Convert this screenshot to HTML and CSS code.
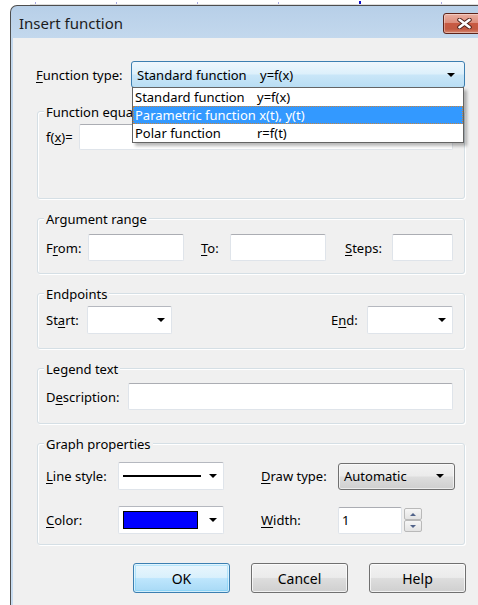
FILE: index.html
```html
<!DOCTYPE html>
<html>
<head>
<meta charset="utf-8">
<title>Insert function</title>
<link rel="stylesheet" href="styles.css">
</head>
<body>
<div class="ruler"><i></i><i></i><i></i><i></i><i class="mark"></i><i></i></div>
<div class="window">
  <div class="titlebar">
    <span class="title">Insert function</span>
    <button class="close" type="button" aria-label="Close">
      <svg width="15" height="11" viewBox="0 0 15 11">
        <path d="M2.5 1.8 L12.5 9.2 M12.5 1.8 L2.5 9.2" stroke="#4a1e18" stroke-width="4.4" stroke-linecap="round"/>
        <path d="M2.5 1.8 L12.5 9.2 M12.5 1.8 L2.5 9.2" stroke="#fff" stroke-width="2.6" stroke-linecap="round"/>
      </svg>
    </button>
  </div>

  <div class="client">
    <div class="type-row">
      <span class="lbl type-lbl"><u>F</u>unction type:</span>
      <div class="combo-wrap">
        <div class="combo combo-focus">
          <span class="col1">Standard function</span><span>y=f(x)</span>
          <span class="arr"></span>
        </div>
        <ul class="droplist">
          <li><span class="col1">Standard function</span><span>y=f(x)</span></li>
          <li class="sel">Parametric function x(t), y(t)</li>
          <li><span class="col1">Polar function</span><span>r=f(t)</span></li>
        </ul>
      </div>
    </div>

    <section class="group g-eq">
      <div class="legend">Function equation</div>
      <div class="row">
        <span class="lbl w-fx">f(<u>x</u>)=</span>
        <div class="edit grow eq-edit"></div>
      </div>
    </section>

    <section class="group g-range">
      <div class="legend">Argument range</div>
      <div class="row">
        <span class="lbl w-from">F<u>r</u>om:</span>
        <div class="edit w-96"></div>
        <span class="lbl w-to"><u>T</u>o:</span>
        <div class="edit w-96"></div>
        <span class="lbl w-steps"><u>S</u>teps:</span>
        <div class="edit w-61"></div>
      </div>
    </section>

    <section class="group g-end">
      <div class="legend">Endpoints</div>
      <div class="row">
        <span class="lbl w-start">St<u>a</u>rt:</span>
        <div class="combo combo-white w-85"><span class="arr"></span></div>
        <span class="lbl w-end">E<u>n</u>d:</span>
        <div class="combo combo-white w-86"><span class="arr"></span></div>
      </div>
    </section>

    <section class="group g-legend">
      <div class="legend">Legend text</div>
      <div class="row">
        <span class="lbl w-desc">D<u>e</u>scription:</span>
        <div class="edit grow"></div>
      </div>
    </section>

    <section class="group g-graph">
      <div class="legend">Graph properties</div>
      <div class="graph-grid">
        <span class="lbl"><u>L</u>ine style:</span>
        <div class="combo combo-white combo-line"><span class="line-sample"></span><span class="arr"></span></div>
        <span></span>
        <span class="lbl"><u>D</u>raw type:</span>
        <div class="combo combo-button"><span>Automatic</span><span class="arr"></span></div>

        <span class="lbl"><u>C</u>olor:</span>
        <div class="combo combo-white combo-line"><span class="swatch"></span><span class="arr"></span></div>
        <span></span>
        <span class="lbl"><u>W</u>idth:</span>
        <div class="spin-field">
          <div class="edit edit-num">1</div>
          <div class="spin">
            <span class="spin-btn"><i class="up"></i></span>
            <span class="spin-btn"><i class="down"></i></span>
          </div>
        </div>
      </div>
    </section>

    <div class="buttons">
      <button class="btn btn-default" type="button">OK</button>
      <button class="btn" type="button">Cancel</button>
      <button class="btn" type="button">Help</button>
    </div>
  </div>
</div>
</body>
</html>
```

FILE: styles.css
```css
* {
  box-sizing: border-box;
}

html,
body {
  margin: 0;
}

body {
  width: 478px;
  height: 605px;
  overflow: hidden;
  background: #fff;
  font-family: "Noto Sans", "Open Sans", sans-serif;
  font-size: 13px;
  color: #000;
}

u {
  text-decoration: underline;
  text-underline-offset: 2px;
}

/* ruler of the window behind the dialog */
.ruler {
  height: 5px;
  margin-left: 30px;
  padding-left: 5px;
  border-bottom: 1px solid #dedede;
  display: flex;
  align-items: flex-end;
  gap: 80px;
}

.ruler i {
  width: 1px;
  height: 2px;
  background: #a9a9e2;
}

.ruler i.mark {
  width: 2px;
  height: 3px;
  background: #1010c8;
}

/* dialog frame */
.window {
  margin-left: 10px;
  width: 484px;
  height: 601px;
  border: 1px solid #4d4d4d;
  border-bottom: 0;
  border-radius: 7px 7px 0 0;
  background: linear-gradient(#b7cfe8, #c3d8ed 32px, #c8dcf0);
  padding: 0 2px;
  display: flex;
  flex-direction: column;
}

.titlebar {
  height: 32px;
  flex: none;
  display: flex;
  align-items: flex-start;
}

.title {
  margin: 7px 0 0 6px;
  font-size: 15px;
  line-height: 20px;
  color: #1c1c1c;
}

.close {
  margin: 7px 5px 0 auto;
  width: 43px;
  height: 21px;
  padding: 0;
  border: 1px solid #5e241a;
  border-radius: 3px;
  background: linear-gradient(#eab0a3, #dc8e7c 45%, #c85a43 50%, #c25a42 80%, #d78a73);
  box-shadow: inset 0 0 0 1px rgba(255, 255, 255, 0.35);
  display: flex;
  align-items: center;
  justify-content: center;
}

.client {
  flex: 1;
  background: #f0f0f0;
  padding: 23px 0 0 24px;
}

/* generic controls */
.lbl {
  white-space: nowrap;
  line-height: 16px;
  flex: none;
}

.edit {
  height: 27px;
  flex: none;
  background: #fff;
  border: 1px solid #dfe4ea;
  border-top-color: #abadb3;
  border-radius: 2px;
}

.grow {
  flex: 1;
}

.combo {
  height: 27px;
  flex: none;
  border-radius: 2px;
  display: flex;
  align-items: center;
  white-space: nowrap;
}

.combo-white {
  background: #fff;
  border: 1px solid #dfe4ea;
  border-top-color: #b5b8bf;
  justify-content: flex-end;
  padding-right: 6px;
}

.arr {
  width: 0;
  height: 0;
  border-left: 4px solid transparent;
  border-right: 4px solid transparent;
  border-top: 4px solid #000;
}

.col1 {
  display: inline-block;
  width: 123px;
}

/* function type */
.type-row {
  display: flex;
  align-items: center;
  height: 27px;
}

.type-lbl {
  width: 95px;
  margin-left: -1px;
}

.combo-wrap {
  position: relative;
  width: 334px;
}

.combo-focus {
  border: 1px solid #3c7fb1;
  border-radius: 3px;
  background: linear-gradient(#eef7fd, #dcf0fb 48%, #c9e6f8 52%, #b9def4);
  padding: 0 9px 0 5px;
}

.combo-focus .arr {
  margin-left: auto;
}

.droplist {
  position: absolute;
  left: 1px;
  top: calc(100% - 1px);
  width: 332px;
  margin: 0;
  padding: 0;
  list-style: none;
  background: #fff;
  border: 1px solid #646464;
  box-shadow: 3px 3px 3px rgba(0, 0, 0, 0.28);
  z-index: 2;
}

.droplist li {
  height: 18px;
  line-height: 18px;
  padding-left: 2px;
  white-space: nowrap;
}

.droplist li .col1 {
  width: 122px;
}

.droplist li.sel {
  background: #3399ff;
  color: #fff;
  outline: 1px dotted #c8843e;
  outline-offset: -1px;
}

/* group boxes */
.group {
  width: 428px;
  margin-top: 19px;
  border: 1px solid #d5dfe5;
  border-radius: 3px;
  box-shadow: 1px 1px 0 #fff, inset 1px 1px 0 #fff;
  padding: 0 11px 0 8px;
}

.legend {
  width: max-content;
  margin: -8px 0 0 -2px;
  padding: 0 2px;
  line-height: 16px;
  background: #f0f0f0;
}

.row {
  display: flex;
  align-items: center;
}

.g-eq {
  margin-top: 23px;
  height: 88px;
}

.g-eq .row {
  margin-top: 4px;
}

.eq-edit {
  height: 26px;
}

.w-fx { width: 33px; }
.w-from { width: 42px; }
.w-to { width: 29px; margin-left: 17px; }
.w-steps { width: 47px; margin-left: 19px; }
.w-96 { width: 96px; }
.w-61 { width: 61px; }

.g-range {
  height: 56px;
}

.g-range .row {
  margin-top: 7px;
}

.g-end {
  height: 56px;
}

.g-end .row {
  margin-top: 4px;
}

.g-end .combo {
  height: 28px;
}

.w-start { width: 41px; }
.w-end { width: 36px; margin-left: auto; }
.w-85 { width: 85px; }
.w-86 { width: 86px; }

.g-legend {
  height: 56px;
}

.g-legend .row {
  margin-top: 6px;
}

.w-desc { width: 82px; }

/* graph properties */
.g-graph {
  height: 102px;
}

.graph-grid {
  margin-top: 10px;
  display: grid;
  grid-template-columns: 72px 106px 37px 77px 117px;
  grid-auto-rows: 28px;
  row-gap: 16px;
  align-items: center;
}

.combo-line {
  height: 28px;
  padding-left: 4px;
}

.line-sample {
  width: 78px;
  height: 2px;
  background: #000;
  margin-right: auto;
}

.swatch {
  width: 75px;
  height: 18px;
  background: #0000ff;
  border: 1px solid #000;
  margin-right: auto;
}

.combo-button {
  height: 27px;
  border: 1px solid #707070;
  border-radius: 3px;
  background: linear-gradient(#f2f2f2, #ebebeb 48%, #dddddd 52%, #cfcfcf);
  box-shadow: inset 0 0 0 1px rgba(255, 255, 255, 0.6);
  padding: 0 10px 0 5px;
}

.combo-button .arr {
  margin-left: auto;
}

.spin-field {
  display: flex;
  align-items: center;
  gap: 2px;
}

.edit-num {
  width: 64px;
  padding-left: 3px;
  line-height: 25px;
}

.spin {
  width: 18px;
  height: 24px;
  display: flex;
  flex-direction: column;
}

.spin-btn {
  flex: 1;
  border: 1px solid #b9b9b9;
  border-radius: 2px;
  background: linear-gradient(#f6f6f6, #e3e3e3);
  display: flex;
  align-items: center;
  justify-content: center;
}

.spin-btn i {
  width: 0;
  height: 0;
  border-left: 3px solid transparent;
  border-right: 3px solid transparent;
}

.spin-btn i.up {
  border-bottom: 3px solid #51638a;
}

.spin-btn i.down {
  border-top: 3px solid #51638a;
}

/* dialog buttons */
.buttons {
  width: 429px;
  margin-top: 18px;
  display: flex;
  justify-content: flex-end;
  gap: 21px;
}

.btn {
  width: 97px;
  height: 30px;
  padding: 0;
  font-family: inherit;
  font-size: 14px;
  color: #000;
  border: 1px solid #707070;
  border-radius: 3px;
  background: linear-gradient(#f2f2f2, #ebebeb 48%, #dddddd 52%, #cfcfcf);
  box-shadow: inset 0 0 0 1px rgba(255, 255, 255, 0.7);
}

.btn-default {
  border-color: #3c7fb1;
  background: linear-gradient(#eaf6fd, #d9f0fc 48%, #bee6fd 52%, #a7d9f5);
  box-shadow: inset 0 0 0 1px rgba(255, 255, 255, 0.6), inset 0 0 0 2px rgba(90, 200, 250, 0.35);
}
```
